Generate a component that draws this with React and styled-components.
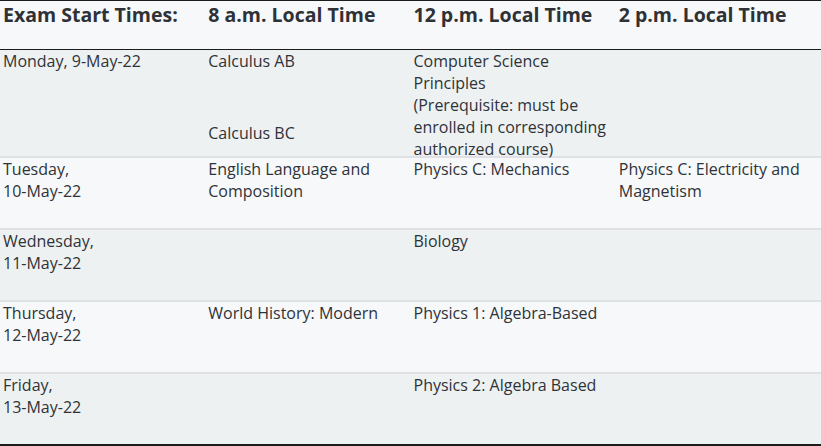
import React from "react";
import styled, { createGlobalStyle } from "styled-components";

const rows = [
	{
		day: ["Monday, 9-May-22"],
		tall: true,
		am: ["Calculus AB", "Calculus BC"],
		noon: [
			"Computer Science Principles",
			"(Prerequisite: must be enrolled in corresponding authorized course)",
		],
		pm: [],
	},
	{
		day: ["Tuesday,", "10-May-22"],
		am: ["English Language and Composition"],
		noon: ["Physics C: Mechanics"],
		pm: ["Physics C: Electricity and Magnetism"],
	},
	{ day: ["Wednesday,", "11-May-22"], am: [], noon: ["Biology"], pm: [] },
	{
		day: ["Thursday,", "12-May-22"],
		am: ["World History: Modern"],
		noon: ["Physics 1: Algebra-Based"],
		pm: [],
	},
	{ day: ["Friday,", "13-May-22"], am: [], noon: ["Physics 2: Algebra Based"], pm: [] },
];

const headers = ["Exam Start Times:", "8 a.m. Local Time", "12 p.m. Local Time", "2 p.m. Local Time"];

export default function App() {
	return (
		<>
			<GlobalStyle />
			<Schedule>
				<HeadRow>
					{headers.map((h) => (
						<HeadCell key={h}>{h}</HeadCell>
					))}
				</HeadRow>
				{rows.map((r, i) => (
					<Row key={i} $odd={i % 2 === 0} $tall={r.tall} $last={i === rows.length - 1}>
						<Cell>
							{r.day.map((d, j) => (
								<div key={j}>{d}</div>
							))}
						</Cell>
						<Cell>
							{r.am.map((c, j) => (
								<Course key={j} $gap={j > 0}>{c}</Course>
							))}
						</Cell>
						<Cell>
							{r.noon.map((c, j) => (
								<Course key={j}>{c}</Course>
							))}
						</Cell>
						<Cell>
							{r.pm.map((c, j) => (
								<Course key={j}>{c}</Course>
							))}
						</Cell>
					</Row>
				))}
			</Schedule>
		</>
	);
}

const GlobalStyle = createGlobalStyle`
	html, body {
		margin: 0;
		padding: 0;
		background: #ffffff;
	}
	body {
		font-family: "Open Sans", "Noto Sans", sans-serif;
		color: #2e3338;
	}
`;

const Schedule = styled.div`
	width: 821px;
	display: flex;
	flex-direction: column;
`;

const HeadRow = styled.div`
	display: grid;
	grid-template-columns: repeat(4, 1fr);
	height: 48px;
	background: #f7f8fa;
	border-top: 1px solid #1c1c1c;
	border-bottom: 1px solid #1c1c1c;
`;

const HeadCell = styled.div`
	padding: 0 3px;
	font-size: 19.5px;
	line-height: 27px;
	font-weight: 700;
	color: #2e3135;
	white-space: nowrap;
`;

const Row = styled.div`
	display: grid;
	grid-template-columns: repeat(4, 1fr);
	height: ${(p) => (p.$tall ? "106px" : "70px")};
	background: ${(p) => (p.$odd ? "#eef1f2" : "#f7f8fa")};
	border-bottom: 2px solid ${(p) => (p.$last ? "#1c1c1c" : "#dfe1e5")};
`;

const Cell = styled.div`
	padding: 0 3px;
	font-size: 16px;
	line-height: 22px;
	color: #2e3338;
	min-width: 0;
`;

const Course = styled.div`
	margin-top: ${(p) => (p.$gap ? "50px" : "0")};
`;
